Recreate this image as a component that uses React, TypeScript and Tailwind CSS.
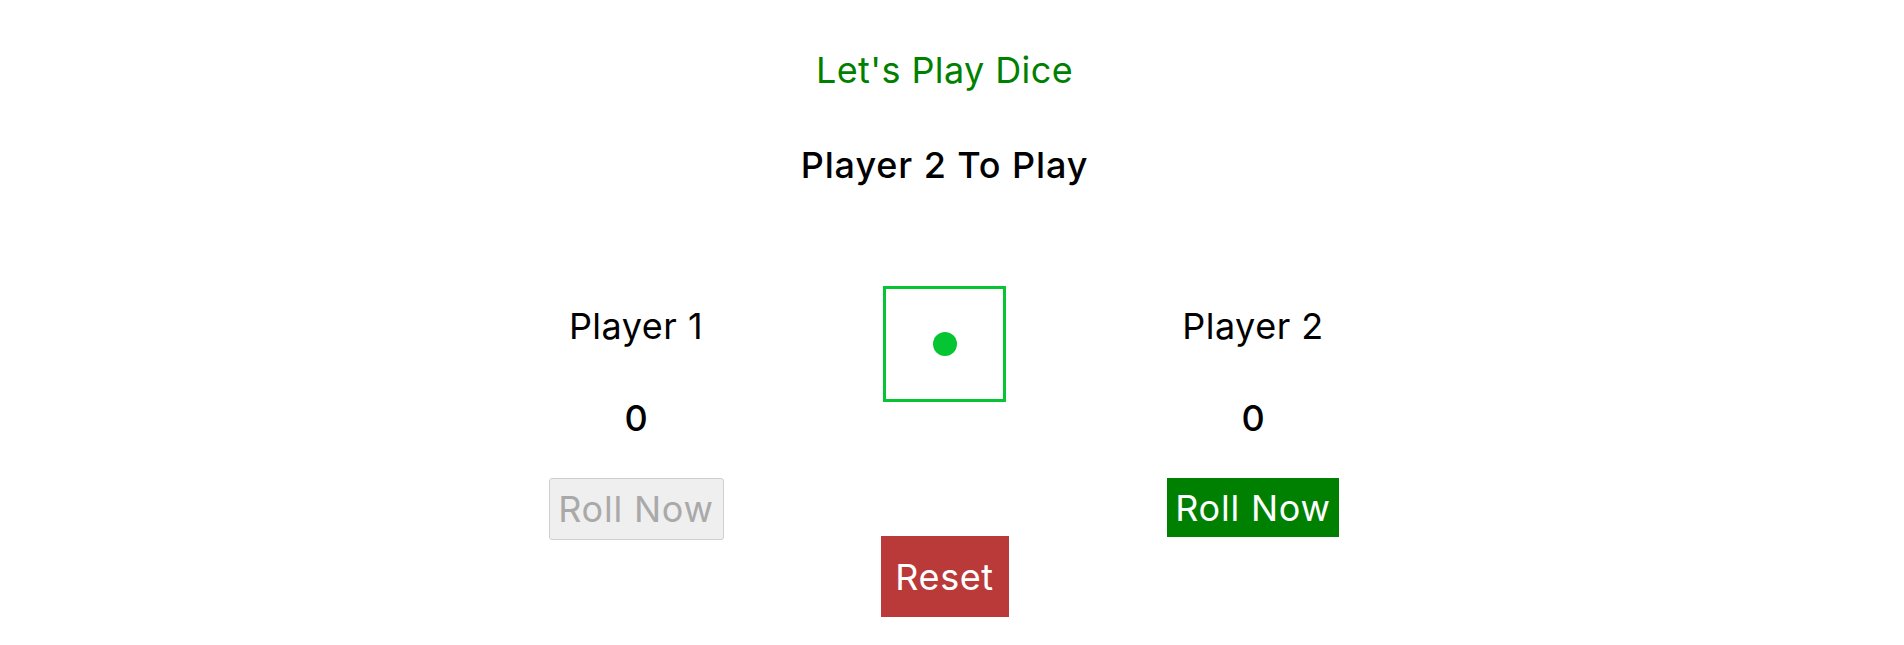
export default function App() {
  return (
    <div className="w-[1889px] h-[645px] overflow-hidden bg-white flex flex-col items-center font-['Inter',sans-serif] text-black">
      <h1 className="mt-[48px] text-[36px] leading-[44px] tracking-[0.4px] text-[#008000] font-normal">Let's Play Dice</h1>
      <h2 className="mt-[51px] text-[36px] leading-[44px] tracking-[0.9px] font-medium">Player 2 To Play</h2>

      <div className="mt-[99px] flex items-start gap-[147px]">
        {/* player 1 */}
        <div className="w-[200px] flex flex-col items-center">
          <p className="mt-[18px] text-[36px] leading-[44px] tracking-[0.5px]">Player 1</p>
          <p className="mt-[48px] text-[36px] leading-[44px] font-medium">0</p>
          <button
            disabled
            className="mt-[38px] w-[175px] h-[62px] flex items-center justify-center bg-[#efefef] border border-[#cfcfcf] rounded-[3px] text-[#a9a9a9] text-[36px] tracking-[0.8px]"
          >
            Roll Now
          </button>
        </div>

        {/* dice + reset */}
        <div className="w-[123px] flex flex-col items-center">
          <div className="w-[123px] h-[116px] border-[3px] border-[#06c532] flex items-center justify-center">
            <span className="w-[24px] h-[24px] rounded-full bg-[#06c532]"></span>
          </div>
          <button className="mt-[134px] w-[128px] h-[81px] shrink-0 flex items-center justify-center bg-[#ba3a3a] text-white text-[36px] tracking-[0.6px]">
            Reset
          </button>
        </div>

        {/* player 2 */}
        <div className="w-[200px] flex flex-col items-center">
          <p className="mt-[18px] text-[36px] leading-[44px] tracking-[0.5px]">Player 2</p>
          <p className="mt-[48px] text-[36px] leading-[44px] font-medium">0</p>
          <button className="mt-[38px] w-[172px] h-[59px] flex items-center justify-center bg-[#008000] text-white text-[36px] tracking-[0.8px]">
            Roll Now
          </button>
        </div>
      </div>
    </div>
  );
}
